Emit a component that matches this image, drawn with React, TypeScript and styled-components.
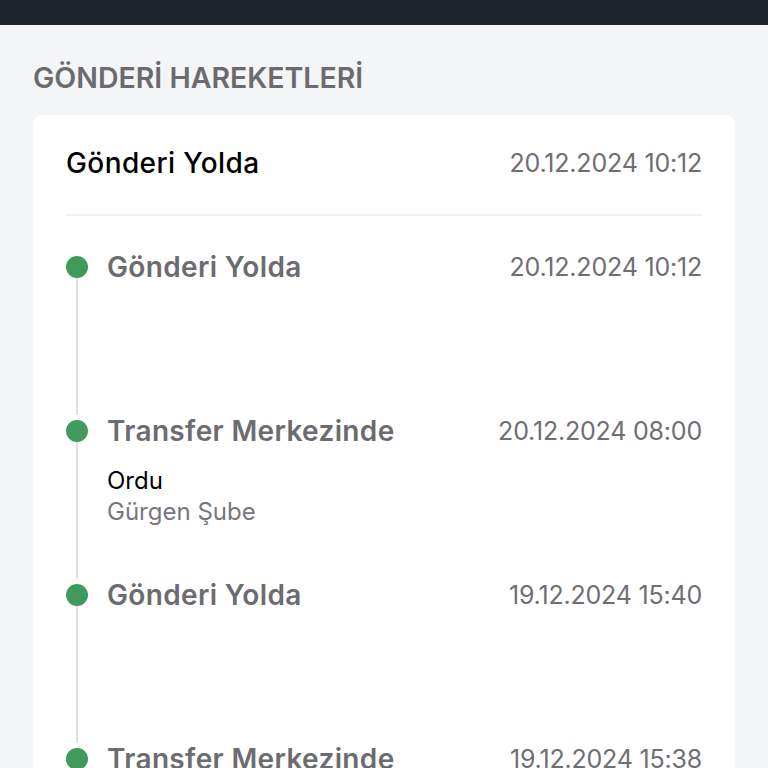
import React from "react";
import styled, { createGlobalStyle } from "styled-components";

const Global = createGlobalStyle`
  html, body { margin: 0; padding: 0; background: #f4f5f6; }
  body { font-family: Inter, "Noto Sans", sans-serif; -webkit-font-smoothing: antialiased; }
`;

const TopBar = styled.div`
  height: 25px;
  background: #1f232b;
`;

const Page = styled.main`
  padding: 0 33px;
`;

const Heading = styled.h2`
  margin: 0;
  padding: 38px 0 22px;
  font-size: 28.5px;
  line-height: 30px;
  font-weight: 600;
  color: #6b6b6f;
  letter-spacing: 0;
`;

const Card = styled.section`
  background: #ffffff;
  border-radius: 9px;
  padding: 33px 33px 0;
  min-height: 700px;
`;

const CardHeader = styled.div`
  display: flex;
  justify-content: space-between;
  align-items: center;
  padding-bottom: 36px;
  border-bottom: 2px solid #f2f2f3;
`;

const HeaderTitle = styled.div`
  font-size: 28px;
  line-height: 30px;
  font-weight: 500;
  color: #000;
  letter-spacing: 0.4px;
`;

const DateText = styled.div`
  font-size: 25px;
  line-height: 30px;
  font-weight: 400;
  color: #6e6e73;
  letter-spacing: -0.2px;
`;

const List = styled.ol`
  list-style: none;
  margin: 0;
  padding: 35px 0 0;
`;

const Item = styled.li`
  display: grid;
  grid-template-columns: 22px 1fr auto;
  column-gap: 19px;
  min-height: 164px;
`;

const Rail = styled.div`
  display: flex;
  flex-direction: column;
  align-items: center;
`;

const Dot = styled.span`
  width: 22px;
  height: 22px;
  margin-top: 5px;
  border-radius: 50%;
  background: #3f9a5b;
  flex: none;
`;

const Line = styled.span`
  flex: 1;
  width: 2px;
  background: #e0e0e2;
`;

const Body = styled.div`
  display: flex;
  flex-direction: column;
`;

const ItemTitle = styled.div`
  font-size: 28px;
  line-height: 32px;
  font-weight: 600;
  color: #6c6c70;
  letter-spacing: 0.35px;
`;

const Place = styled.div<{ $muted?: boolean; $first?: boolean }>`
  font-size: 24px;
  line-height: 31px;
  color: ${(p) => (p.$muted ? "#77777b" : "#000")};
  margin-top: ${(p) => (p.$first ? "18px" : "0")};
`;

const ItemDate = styled(DateText)`
  line-height: 32px;
`;

type Ev = { title: string; date: string; city?: string; branch?: string };

const events: Ev[] = [
  { title: "Gönderi Yolda", date: "20.12.2024 10:12" },
  { title: "Transfer Merkezinde", date: "20.12.2024 08:00", city: "Ordu", branch: "Gürgen Şube" },
  { title: "Gönderi Yolda", date: "19.12.2024 15:40" },
  { title: "Transfer Merkezinde", date: "19.12.2024 15:38" },
];

export default function App() {
  return (
    <>
      <Global />
      <TopBar />
      <Page>
        <Heading>GÖNDERİ HAREKETLERİ</Heading>
        <Card>
          <CardHeader>
            <HeaderTitle>Gönderi Yolda</HeaderTitle>
            <DateText>20.12.2024 10:12</DateText>
          </CardHeader>
          <List>
            {events.map((e, i) => (
              <Item key={i}>
                <Rail>
                  <Dot />
                  <Line />
                </Rail>
                <Body>
                  <ItemTitle>{e.title}</ItemTitle>
                  {e.city && <Place $first>{e.city}</Place>}
                  {e.branch && <Place $muted>{e.branch}</Place>}
                </Body>
                <ItemDate>{e.date}</ItemDate>
              </Item>
            ))}
          </List>
        </Card>
      </Page>
    </>
  );
}
